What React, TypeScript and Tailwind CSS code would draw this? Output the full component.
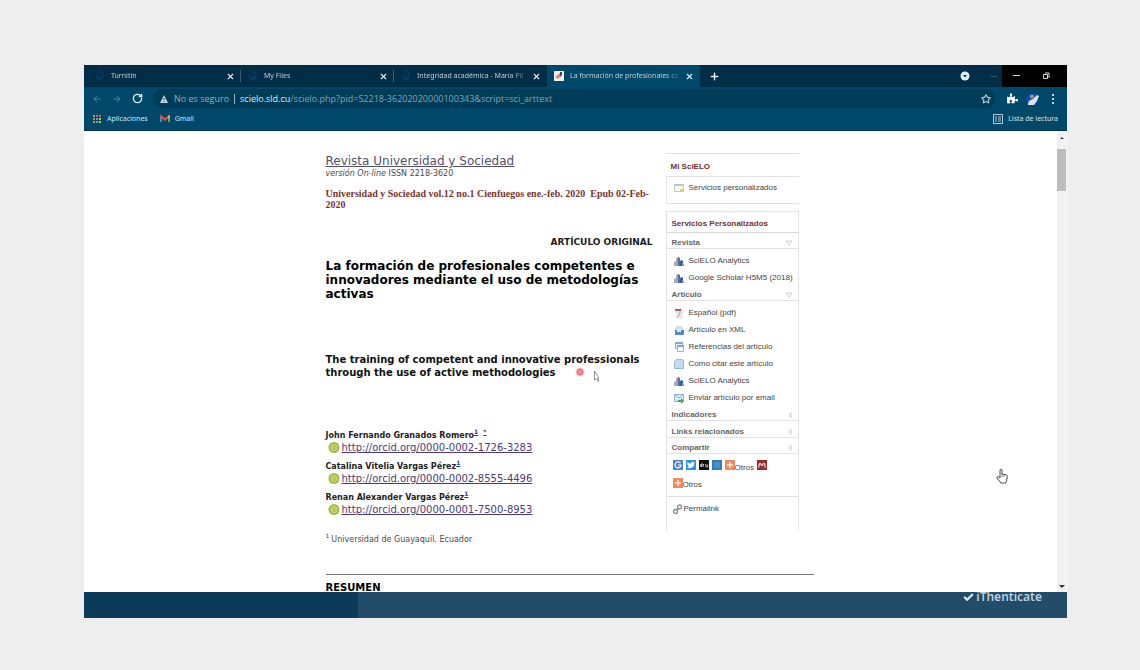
import { useState } from "react";
import clsx from "clsx";
import { X, Plus, ArrowLeft, ArrowRight, RotateCw, Star, Check } from "lucide-react";
import { FaTwitter, FaPuzzlePiece } from "react-icons/fa";

const tabs = [
  { id: 1, title: "Turnitin", icon: "turnitin" },
  { id: 2, title: "My Files", icon: "turnitin" },
  { id: 3, title: "Integridad académica - María Pil", icon: "turnitin" },
  { id: 4, title: "La formación de profesionales co", icon: "scielo" },
];

const authors = [
  { name: "John Fernando Granados Romero", orcid: "0000-0002-1726-3283", corresponding: true },
  { name: "Catalina Vitelia Vargas Pérez", orcid: "0000-0002-8555-4496", corresponding: false },
  { name: "Renan Alexander Vargas Pérez", orcid: "0000-0001-7500-8953", corresponding: false },
];

const journalLinks = [
  { icon: "chart", label: "SciELO Analytics" },
  { icon: "chart", label: "Google Scholar H5M5 (2018)" },
];

const articleLinks = [
  { icon: "pdf", label: "Español (pdf)" },
  { icon: "xml", label: "Artículo en XML" },
  { icon: "refs", label: "Referencias del artículo" },
  { icon: "cite", label: "Como citar este artículo" },
  { icon: "chart", label: "SciELO Analytics" },
  { icon: "mail", label: "Enviar artículo por email" },
];

const TabIcon = ({ name }: { name: string }) =>
  name === "scielo" ? (
    <svg viewBox="0 0 10 10" className="size-[10px] shrink-0">
      <rect width="10" height="10" fill="#f3eeee" />
      <path d="M1 6c2-1 3-3 5-4l1 3-3 3z" fill="#d9897c" />
      <path d="M6 1h2v3L6 6z" fill="#4b4450" />
    </svg>
  ) : (
    <svg viewBox="0 0 10 10" className="size-[10px] shrink-0" fill="none" stroke="#0a456b">
      <path d="M3 1h5v5M2 3v5h5M4 5l2 2M7 5v3H4" />
    </svg>
  );

const ItemIcon = ({ name }: { name: string }) => (
  <svg viewBox="0 0 12 12" className="size-3 shrink-0">
    {name === "chart" && (
      <>
        <path d="M1 7l2-1v5H1z" fill="#8fb2d8" />
        <path d="M3 4l2-2 2 1v8H3z" fill="#4672b4" />
        <path d="M3 4l2-2v9H3z" fill="#c99a94" />
        <path d="M7 6l2-1 1 1v5H7z" fill="#2f5fa6" />
        <path d="M9 8l2 1v2H9z" fill="#6fa0d4" />
      </>
    )}
    {name === "pdf" && (
      <>
        <path d="M3 2h6v9H4z" fill="#eeecee" stroke="#d5d0d6" strokeWidth=".6" />
        <path d="M2 2h6v2H2z" fill="#b45a68" />
        <path d="M7 4c0 3-1 5-3 6" fill="none" stroke="#a99aa8" />
      </>
    )}
    {name === "xml" && (
      <>
        <path d="M3 2h6l1 3v5H2V5z" fill="#cfe0f3" />
        <path d="M2 6h9v5H2z" fill="#5687c6" />
        <path d="M4 5h4v3H4z" fill="#dce9f7" />
      </>
    )}
    {name === "refs" && (
      <>
        <path d="M2.500 1.500h7v6h-7z" fill="#eaf3fc" stroke="#8bb4dd" />
        <path d="M4.500 4.500h6v6h-6z" fill="#fff" stroke="#8bb4dd" />
        <path d="M2 1h8v2H2zM4 4h7v2H4z" fill="#7aa8d8" />
      </>
    )}
    {name === "cite" && <path d="M3.500 1.500h6l1 1v8h-9v-7z" fill="#c3dcf5" stroke="#94bbe0" />}
    {name === "mail" && (
      <>
        <path d="M1.500 2.500h9v7h-9z" fill="#d9eaf8" stroke="#8fb2cf" />
        <path d="M2 3l4 3 4-3" fill="none" stroke="#8fb2cf" />
        <path d="M5 8h3V6l3 3-3 3v-2H5z" fill="#4fa25a" />
      </>
    )}
    {name === "services" && (
      <>
        <path d="M1.500 2.500h9v7h-9z" fill="#fbfaf0" stroke="#c3c7cc" />
        <path d="M1 2h10v2H1z" fill="#b9c3ce" />
        <path d="M7 7h4v3H7z" fill="#e0cc72" />
      </>
    )}
    {name === "permalink" && (
      <g fill="none" stroke="#8b8b8b" strokeWidth="1.300">
        <circle cx="3.500" cy="8.500" r="2" />
        <circle cx="7.500" cy="4" r="2" />
        <path d="M4.500 7l2-2" />
      </g>
    )}
  </svg>
);

const OrcidIcon = () => (
  <svg viewBox="0 0 12 12" className="size-3 shrink-0">
    <circle cx="6" cy="5.500" r="5.500" fill="#a9bb3e" />
    <circle cx="6" cy="5.500" r="3" fill="none" stroke="#d4dd98" />
    <path d="M5 4v3M7 4.500v2" stroke="#d4dd98" />
  </svg>
);

const TabBar = () => {
  const [active, setActive] = useState(4);

  return (
    <div className="flex h-[22px] bg-[#012d46] text-[#b9cfda]">
      <div className="flex min-w-0 pl-1">
        {tabs.map((tab) => (
          <div
            key={tab.id}
            className={clsx(
              "flex w-[153px] min-w-0 items-center pr-[6px] pl-[7px]",
              tab.id === active && "bg-[#00486a]"
            )}
          >
            <button
              className="flex min-w-0 grow items-center gap-[6px] text-left"
              onClick={() => setActive(tab.id)}
            >
              <TabIcon name={tab.icon} />
              <span className="min-w-0 grow whitespace-nowrap mask-r-from-85% text-[7px] leading-[10px]">
                {tab.title}
              </span>
            </button>
            <button aria-label="Cerrar" className="ml-[3px] shrink-0 text-[#e3f0f5]">
              <X className="size-[9px]" strokeWidth={3} />
            </button>
            {tab.id < 3 && <span className="-mr-[6px] ml-[5px] h-3 w-px shrink-0 bg-[#3b5f74]" />}
          </div>
        ))}
      </div>
      <button aria-label="Nueva pestaña" className="ml-[9px] text-[#e3f0f5]">
        <Plus className="size-[11px]" strokeWidth={3} />
      </button>
      <div className="ml-auto flex items-center">
        <svg viewBox="0 0 10 10" className="mr-[21px] size-[10px]">
          <circle cx="5" cy="5" r="4.500" fill="#e0eef4" />
          <path d="M3 4h4L5 6.500z" fill="#012d46" />
        </svg>
        <span className="mr-[5px] h-px w-[6px] bg-[#2f566c]" />
        <div className="flex h-full w-[65px] items-center bg-black pb-px">
          <button aria-label="Minimizar" className="ml-[11px] flex h-3 w-[7px] items-center">
            <span className="h-px w-full bg-[#d5d5d5]" />
          </button>
          <button aria-label="Restaurar" className="ml-[22px]">
            <svg viewBox="0 0 8 8" className="size-2" fill="none" stroke="#d5d5d5">
              <path d="M1.500 2.500h4v4h-4zM3 1h4v5" />
            </svg>
          </button>
        </div>
      </div>
    </div>
  );
};

const AddressBar = () => (
  <div className="flex h-[23px] items-center bg-[#00486a] pl-2 text-[#a9c6d4]">
    <button aria-label="Atrás">
      <ArrowLeft className="size-[10px] text-[#4a93b4]" />
    </button>
    <button aria-label="Adelante" className="ml-[10px]">
      <ArrowRight className="size-[10px] text-[#4a93b4]" />
    </button>
    <button aria-label="Recargar" className="ml-[10px] text-[#e3f0f5]">
      <RotateCw className="size-[11px]" strokeWidth={3} />
    </button>
    <div className="ml-[10px] flex h-[19px] min-w-0 grow items-center rounded-full bg-[#003c57] pr-1 pl-[7px] font-['Open_Sans',sans-serif] text-[9px] leading-3">
      <svg viewBox="0 0 8 8" className="size-2 shrink-0">
        <path d="M4 0l4 8H0z" fill="#c3d8e2" />
        <path d="M4 3v2M4 6v1" stroke="#003c57" />
      </svg>
      <span className="ml-[6px] shrink-0 text-[#8fb0c0]">No es seguro</span>
      <span className="mx-[5px] h-[10px] w-px shrink-0 bg-[#8fb0c0]" />
      <label htmlFor="url" className="shrink-0 text-[#dcebf2]">
        scielo.sld.cu
      </label>
      <input
        id="url"
        className="min-w-0 grow bg-transparent text-[#7fa5b7] outline-none"
        defaultValue="/scielo.php?pid=S2218-36202020000100343&script=sci_arttext"
      />
      <button aria-label="Añadir a marcadores">
        <Star className="size-[10px]" strokeWidth={3} />
      </button>
    </div>
    <button aria-label="Extensiones" className="ml-[12px] text-white">
      <FaPuzzlePiece className="size-[11px]" />
    </button>
    <button aria-label="Perfil" className="ml-[8px]">
      <svg viewBox="0 0 14 14" className="size-[14px]">
        <circle cx="6" cy="7" r="6" fill="#0f4bb0" />
        <path d="M2 13c0-4 2-5 5-6l4-4 2 1-2 5-3 4z" fill="#dbe3ee" />
        <circle cx="6" cy="4.500" r="2" fill="#a98f94" />
      </svg>
    </button>
    <button aria-label="Menú" className="mr-3 ml-[11px]">
      <svg viewBox="0 0 4 10" className="h-[10px] w-1" fill="#c3d8e2">
        <path d="M1 0h2v2H1zM1 4h2v2H1zM1 8h2v2H1z" />
      </svg>
    </button>
  </div>
);

const Bookmarks = () => (
  <div className="flex h-[21px] items-center border-b border-[#00344f] bg-[#00486a] pr-[9px] pb-[2px] pl-2 text-[7px] leading-[10px] text-[#d3e4ec]">
    <a href="#" className="flex items-center gap-[5px]">
      <svg viewBox="0 0 10 10" className="size-[10px]">
        <path d="M1 1h2v2H1zM1 7h2v2H1z" fill="#d98b62" />
        <path d="M4 1h2v2H4zM7 1h2v2H7z" fill="#cf6a55" />
        <path d="M1 4h2v2H1zM4 7h2v2H4z" fill="#6fb06c" />
        <path d="M4 4h2v2H4z" fill="#5d9bd0" />
        <path d="M7 4h2v2H7zM7 7h2v2H7z" fill="#d9b55a" />
      </svg>
      Aplicaciones
    </a>
    <a href="#" className="ml-3 flex items-center gap-[5px]">
      <svg viewBox="0 0 10 8" className="h-2 w-[10px]">
        <path d="M0 1h2v6H0z" fill="#4d86e0" />
        <path d="M8 1h2v6H8z" fill="#55a868" />
        <path d="M0 0h1l4 3 4-3h1v2L5 6 0 2z" fill="#e0503f" />
        <path d="M8 1l2-1v2L8 4z" fill="#efb93a" />
      </svg>
      Gmail
    </a>
    <button className="ml-auto flex items-center gap-[5px]">
      <svg viewBox="0 0 10 10" className="size-[10px]" fill="none" stroke="#b5cdd9">
        <path d="M.5.5h9v9h-9zM2 3h2M5 3h3M2 5h2M5 5h3M2 7h2M5 7h3" />
      </svg>
      Lista de lectura
    </button>
  </div>
);

const Article = () => (
  <article className="min-w-0 grow">
    <a href="#" className="block text-[12px] leading-4 text-[#55506a] underline">
      Revista Universidad y Sociedad
    </a>
    <p className="text-[8px] leading-[9px] text-[#4a4a4a]">
      <i>versión On-line</i> ISSN 2218-3620
    </p>
    <p className="mt-[10px] font-['Liberation_Serif',serif] text-[10px] leading-[11px] font-bold text-[#7d342c]">
      Universidad y Sociedad vol.12 no.1 Cienfuegos ene.-feb. 2020 &nbsp;Epub 02-Feb-2020
    </p>
    <p className="mt-[26px] text-right text-[9px] leading-3 font-bold text-[#1d1d1d]">
      ARTÍCULO ORIGINAL
    </p>
    <h1 className="mt-[11px] text-[12px] leading-[14px] font-bold">
      La formación de profesionales competentes e innovadores mediante el uso de metodologías
      activas
    </h1>
    <h2 className="relative mt-[52px] text-[10px] leading-[13px] font-bold text-[#111]">
      The training of competent and innovative professionals through the use of active
      methodologies
      <svg viewBox="0 0 24 16" className="absolute bottom-[-4px] left-[249px] h-4 w-6">
        <circle cx="5" cy="5" r="4.500" fill="#fbdada" />
        <circle cx="5" cy="5" r="3.500" fill="#ee7275" />
        <path d="M3 4h4M3 6h4" stroke="#f8b7b5" strokeWidth=".7" />
        <path d="M19.500 4v9l2-1.500 1.500 3 1-.5-1.200-3H24z" fill="#fff" stroke="#777" strokeWidth=".8" />
      </svg>
    </h2>
    <ul className="mt-[51px] flex flex-col gap-[7px]">
      {authors.map((author) => (
        <li key={author.orcid}>
          <p className="text-[8px] leading-3 font-bold text-[#1d1d1d]">
            {author.name}
            <sup className="-top-1 text-[6px] leading-none text-[#2c3a86]">
              <a href="#" className="underline">1</a>
              {author.corresponding && <a href="#" className="ml-[5px] underline">*</a>}
            </sup>
          </p>
          <div className="flex gap-[2px] pl-[2px] text-[10px] leading-3">
            <OrcidIcon />
            <a href="#" className="text-[#4c3a78] underline">http://orcid.org/{author.orcid}</a>
          </div>
        </li>
      ))}
    </ul>
    <p className="mt-[18px] text-[8px] leading-3 text-[#4a4a4a]">
      <sup className="-top-1 mr-[2px] text-[6px] leading-none">1</sup>
      Universidad de Guayaquil. Ecuador
    </p>
  </article>
);

const Arrow = ({ open }: { open: boolean }) => (
  <svg viewBox="0 0 8 6" className="h-[6px] w-2" fill="none" stroke="#c4c4c4" strokeWidth=".8">
    {open ? <path d="M1 1h6L4 5z" /> : <path d="M6 .5v5L4 3z" />}
  </svg>
);

const Group = ({ title, open, className }: { title: string; open: boolean; className?: string }) => (
  <button
    className={clsx(
      "flex w-full items-center justify-between border-b border-[#e2e2e2] pr-[5px] pl-[5px] text-left font-bold text-[#666]",
      className
    )}
  >
    {title}
    <Arrow open={open} />
  </button>
);

const LinkList = ({ items }: { items: { icon: string; label: string }[] }) => (
  <ul className="flex flex-col gap-[5px] pl-[6px]">
    {items.map((item) => (
      <li key={item.label} className="h-3">
        <a href="#" className="flex h-3 items-center gap-1 whitespace-nowrap">
          <ItemIcon name={item.icon} />
          {item.label}
        </a>
      </li>
    ))}
  </ul>
);

const MoreIcon = () => (
  <svg viewBox="0 0 10 10" className="size-[10px]">
    <rect width="10" height="10" fill="#f08a5c" />
    <path d="M5 2v6M2 5h6" stroke="#ffe9dd" strokeWidth="1.500" />
  </svg>
);

const Sidebar = () => (
  <aside className="w-[133px] shrink-0 font-['Liberation_Sans',sans-serif] text-[8px] leading-[10px] text-[#444]">
    <section className="h-[51px] border-y border-[#e0e0e0]">
      <h3 className="border-b border-[#e2e2e2] pt-[8px] pb-1 pl-[5px] font-bold text-[#7b2f2b]">Mi SciELO</h3>
      <div className="border-l border-[#e8e8e8] pt-[5px] pb-[10px] pl-[6px]">
        <a href="#" className="flex items-center gap-1">
          <ItemIcon name="services" />
          Servicios personalizados
        </a>
      </div>
    </section>
    <section className="mt-[7px] border-t border-r border-l border-[#e2e2e2] pb-[16px]">
      <h3 className="border-b border-[#d8d8d8] pt-[7px] pb-[3px] pl-[5px] font-bold text-[#7b2f2b]">
        Servicios Personalizados
      </h3>
      <Group title="Revista" open className="pt-[5px]" />
      <div className="pt-[6px] pb-[6px]">
        <LinkList items={journalLinks} />
      </div>
      <Group title="Artículo" open />
      <div className="pt-[6px] pb-[6px]">
        <LinkList items={articleLinks} />
      </div>
      <Group title="Indicadores" open={false} />
      <Group title="Links relacionados" open={false} className="pt-[6px]" />
      <Group title="Compartir" open={false} className="pt-[5px]" />
      <div className="flex items-center gap-[3px] pt-[6px] pl-[6px]">
        <a href="#" aria-label="Google">
          <svg viewBox="0 0 10 10" className="size-[10px]">
            <rect width="10" height="10" fill="#4f7fd0" />
            <path d="M7.500 3.200A3 3 0 1 0 8 5H5" fill="none" stroke="#fff" strokeWidth="1.200" />
          </svg>
        </a>
        <a href="#" aria-label="Twitter" className="flex size-[10px] items-center justify-center bg-[#2a97dd]">
          <FaTwitter className="size-2 text-white" />
        </a>
        <a href="#" aria-label="Digg">
          <svg viewBox="0 0 10 10" className="size-[10px]">
            <rect width="10" height="10" fill="#111" />
            <path d="M1.500 4.500h1.500v2H1.500zM3 3v3.500M4.500 4v2.500M6 4.500h1v2.500M8.500 4.500v2.500H7" fill="none" stroke="#ddd" strokeWidth=".8" />
          </svg>
        </a>
        <a href="#" aria-label="CiteULike">
          <svg viewBox="0 0 10 10" className="size-[10px]">
            <rect width="10" height="10" fill="#2f7fb5" />
            <path d="M2 3h6M2 5h6M2 7h6" stroke="#6fb0d8" strokeWidth=".8" />
          </svg>
        </a>
        <a href="#" className="flex items-end">
          <MoreIcon />
          <span className="-mb-[3px]">Otros</span>
        </a>
        <a href="#" aria-label="Mendeley">
          <svg viewBox="0 0 10 10" className="size-[10px]">
            <rect width="10" height="10" fill="#9c2b2b" />
            <path d="M1.500 7.500c1-1 0-4 1.500-4s1 2 2 2 .500-2 2-2 .500 3 1.500 4" fill="none" stroke="#f0d5d5" strokeWidth="1.300" />
          </svg>
        </a>
      </div>
      <a href="#" className="flex items-end pt-2 pl-[6px]">
        <MoreIcon />
        <span className="-mb-[2px]">Otros</span>
      </a>
      <a href="#" className="mt-[8px] flex items-center border-t border-[#e0e0e0] pt-[6px] pl-[5px]">
        <ItemIcon name="permalink" />
        Permalink
      </a>
    </section>
  </aside>
);

const Scrollbar = () => (
  <div className="flex w-[10px] shrink-0 flex-col items-center border-r border-[#f6f6f6] bg-[#f1f1f1]">
    <svg viewBox="0 0 6 4" className="mt-[5px] h-1 w-[6px] shrink-0">
      <path d="M1 3l2-2 2 2z" fill="#444" />
    </svg>
    <div className="mt-[9px] h-[42px] w-[9px] bg-[#bdbdbd]" />
    <svg viewBox="0 0 6 4" className="mt-auto mb-[3px] h-1 w-[6px] shrink-0">
      <path d="M0 0l3 3 3-3z" fill="#333" />
    </svg>
  </div>
);

const App = () => {
  return (
    <div className="min-h-screen bg-[#eee] pt-[65px] pr-[73px] pb-[52px] pl-[84px] font-['Noto_Sans',sans-serif]">
      <div className="flex flex-col">
        <header>
          <TabBar />
          <AddressBar />
          <Bookmarks />
        </header>
        <main className="relative flex bg-white font-['DejaVu_Sans',sans-serif] text-black">
          <div className="min-w-0 grow">
            <div className="mx-auto max-w-[490px] pt-[22px]">
              <div className="flex gap-[13px] pr-[17px]">
                <Article />
                <Sidebar />
              </div>
              <hr className="mt-[28px] mr-[2px] border-[#777]" />
              <h3 className="mt-[8px] text-[10px] leading-[9px] font-bold">RESUMEN</h3>
            </div>
          </div>
          <Scrollbar />
          <svg viewBox="0 0 12 16" className="absolute right-[59px] bottom-[108px] h-4 w-3">
            <path
              d="M4 9V2.200c0-1.400 2-1.400 2 0V6l4 .8c1 .2 1.500.8 1.300 1.800L10.500 13 9.500 15H5L1 10c-.6-1.200.6-2 1.500-1.200L4 10z"
              fill="#fff"
              stroke="#333"
              strokeWidth=".9"
            />
            <path d="M6 6v3M8 7v2" stroke="#555" strokeWidth=".7" />
          </svg>
        </main>
        <footer className="flex h-[26px] bg-[#234c69]">
          <div className="w-[274px] bg-[#0c3a59]" />
          <div className="mr-[25px] ml-auto flex gap-[2px] text-[12px] leading-[10px] font-semibold text-[#b9d0df]">
            <Check className="size-[11px] text-[#d5eaf5]" strokeWidth={5} />
            iThenticate
          </div>
        </footer>
      </div>
    </div>
  );
};

export default App;
